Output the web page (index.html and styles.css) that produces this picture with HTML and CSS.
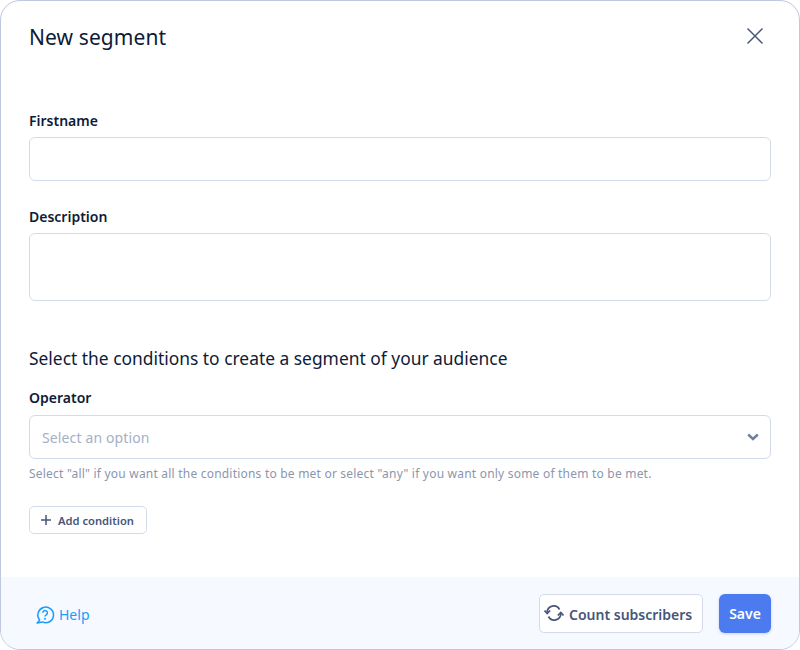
FILE: index.html
```html
<!DOCTYPE html>
<html lang="en">
<head>
<meta charset="utf-8">
<title>New segment</title>
<link rel="stylesheet" href="styles.css">
</head>
<body>
<div class="modal">
  <header class="head">
    <h1 class="title">New segment</h1>
    <svg class="close" width="20" height="20" viewBox="0 0 20 20" fill="none"><path d="M2.5 2.5l15 15M17.5 2.5l-15 15" stroke="#4a5a7c" stroke-width="1.5"/></svg>
  </header>
  <main class="body">
    <label class="label">Firstname</label>
    <div class="input"></div>
    <label class="label second">Description</label>
    <div class="input area"></div>
    <h2 class="sub">Select the conditions to create a segment of your audience</h2>
    <label class="label">Operator</label>
    <div class="input select">
      <span>Select an option</span>
      <svg width="12" height="8" viewBox="0 0 12 8" fill="none"><path d="M1.200 1.500L6 6l4.800-4.500" stroke="#6f7f9b" stroke-width="2.400"/></svg>
    </div>
    <p class="hint">Select "all" if you want all the conditions to be met or select "any" if you want only some of them to be met.</p>
    <button class="btn small"><svg width="12" height="12" viewBox="0 0 12 12" fill="none"><path d="M6 1v10M1 6h10" stroke="#46567a" stroke-width="1.500"/></svg>Add condition</button>
  </main>
  <footer class="foot">
    <a class="help"><svg class="help-icon" width="20" height="20" viewBox="0 0 20 20" fill="none"><path d="M4.600 14.800A7.800 7.800 0 1 1 7.200 16.900c-1.700.4-3.400 1-5.200 1.100 1.100-.8 2.100-1.900 2.600-3.200z" stroke="#1a9dfa" stroke-width="1.500" stroke-linejoin="round"/><path d="M7.800 7.800a2.300 2.300 0 1 1 3.500 2c-.9.500-1.300 1-1.300 1.800" stroke="#1a9dfa" stroke-width="1.500"/><circle cx="10" cy="13.700" r="1" fill="#1a9dfa"/></svg>Help</a>
    <div class="actions">
      <button class="btn count"><svg width="20" height="16" viewBox="0 0 20 16" fill="none"><path d="M3.200 7.500A6.500 6.500 0 0 1 15.500 4.500M16.800 8.500A6.500 6.500 0 0 1 4.500 11.500" stroke="#46567a" stroke-width="1.700"/><path d="M0.500 5.500l2.700 3 3-3M13.800 10.500l3-3 2.700 3" stroke="#46567a" stroke-width="1.700"/></svg><span class="count-text">Count subscribers</span></button>
      <button class="save"><span class="save-text">Save</span></button>
    </div>
  </footer>
</div>
</body>
</html>
```

FILE: styles.css
```css
* { box-sizing: border-box; }
html, body { margin: 0; padding: 0; }
body { width: 800px; height: 650px; background: #fff; font-family: "Noto Sans", sans-serif; overflow: hidden; }
.modal { width: 800px; height: 650px; display: flex; flex-direction: column; border: 1px solid #bfc8de; border-radius: 20px; overflow: hidden; background: #fff; }
.head { display: flex; justify-content: space-between; align-items: flex-start; padding: 20px 34px 0 28px; height: 72px; flex: none; }
.title { margin: 0; font-size: 21px; line-height: 32px; font-weight: 400; color: #0d1b38; letter-spacing: 0.1px; }
.close { margin-top: 5px; }
.body { flex: 1; padding: 0 28px; display: flex; flex-direction: column; align-items: flex-start; }
.label { display: block; margin-top: 38px; font-size: 14px; line-height: 20px; font-weight: 600; color: #0d1b38; }
.label.second { margin-top: 26px; }
.sub + .label { margin-top: 17px; }
.input { width: 742px; height: 44px; margin-top: 6px; border: 1px solid #d3daea; border-radius: 6px; background: #fff; }
.area { height: 68px; }
.sub { margin: 44px 0 0; font-size: 17.400px; line-height: 26px; font-weight: 400; color: #0d1b38; }
.select { display: flex; justify-content: space-between; align-items: center; margin-top: 7px; padding: 0 11px 0 12px; font-size: 14px; letter-spacing: 0.13px; color: #a6b0c4; }
.hint { margin: 6px 0 0; font-size: 12px; line-height: 18px; letter-spacing: 0.21px; color: #8b96ad; }
.btn { display: inline-flex; align-items: center; background: #fff; border: 1px solid #d3daea; border-radius: 5px; font-family: inherit; font-weight: 600; color: #46567a; padding: 0; }
.small { margin-top: 23px; height: 28px; width: 118px; padding-left: 10px; gap: 6px; font-size: 11.200px; }
.foot { flex: none; height: 72px; background: #f6f9ff; display: flex; justify-content: space-between; align-items: center; padding: 0 28px 0 34px; }
.help { display: flex; align-items: center; gap: 4px; margin-top: 4px; font-size: 14px; line-height: 22px; color: #1a9dfa; }
.help-icon { margin-top: -1px; }
.actions { display: flex; align-items: center; gap: 16px; }
.count { height: 39px; width: 164px; padding-left: 4px; gap: 5px; font-size: 14px; }
.count-text { margin-top: 2px; }
.save { height: 39px; width: 52px; background: #4c7bf0; color: #fff; border: 0; border-radius: 6px; font-family: inherit; font-size: 14px; font-weight: 600; padding: 0; box-shadow: 0 1px 3px rgba(76,123,240,.3); }
.save-text { display: block; margin-top: 1px; }
```
